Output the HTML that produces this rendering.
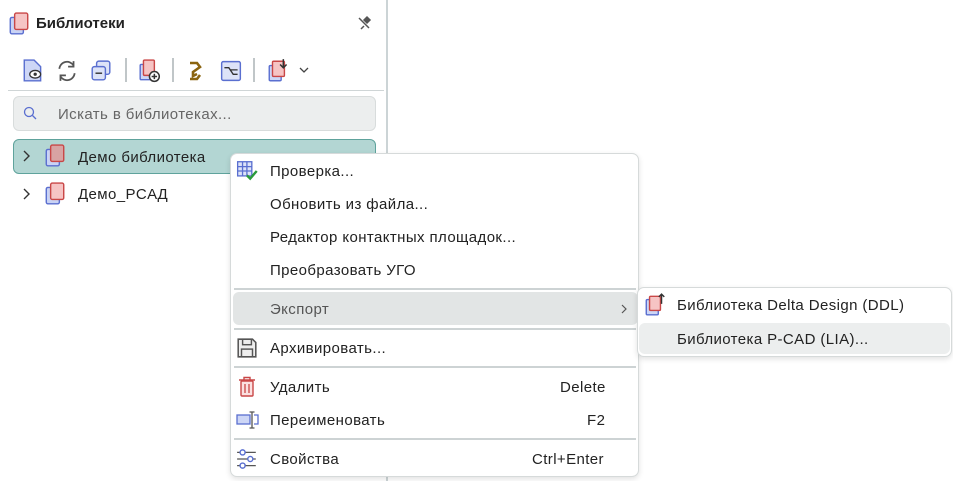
<!DOCTYPE html>
<html><head><meta charset="utf-8"><style>
*{margin:0;padding:0;box-sizing:border-box}
body{width:953px;height:481px;background:#fff;font-family:"Liberation Sans","DejaVu Sans",sans-serif;position:relative;overflow:hidden;color:#222}
.a{position:absolute}
.t{font-size:15px;letter-spacing:0.4px;white-space:nowrap}
.sep{position:absolute;height:2px;background:#cdd3d4}
</style></head><body>
<div class="a" style="left:386px;top:0;width:2px;height:481px;background:#ccd4d6"></div>

<svg class="a" style="left:8px;top:12px" width="22" height="24" viewBox="0 0 20 22"><rect x="2" y="5" width="12" height="15" rx="1.5" fill="#c9d3f5" stroke="#5b6fd0" stroke-width="1.3"/><rect x="6" y="1" width="12" height="15" rx="1.5" fill="#f6c4c4" stroke="#c94747" stroke-width="1.3"/></svg>
<div class="a" style="left:36px;top:15px;font-weight:bold;font-size:15px;white-space:nowrap">Библиотеки</div>
<svg class="a" style="left:356px;top:15px" width="16" height="16" viewBox="0 0 16 16"><path d="M3 3L13 13M5 14L8 11M8 5L11 2L14 5L11 8Z" stroke="#555" stroke-width="1.5" fill="#555"/></svg>

<svg class="a" style="left:22px;top:59px" width="22" height="24" viewBox="0 0 20 22"><path d="M2 1H11L17 7V20H2Z" fill="#cdd6f6" stroke="#5a6fd0" stroke-width="1.3"/><ellipse cx="12" cy="14" rx="5" ry="3.5" fill="#fff" stroke="#333" stroke-width="1.2"/><circle cx="12" cy="14" r="1.5" fill="#333"/></svg>
<svg class="a" style="left:55px;top:59px" width="24" height="24" viewBox="0 0 22 22"><path d="M4 9A7 7 0 0 1 17 6M18 13A7 7 0 0 1 5 16" stroke="#555" stroke-width="1.6" fill="none"/><path d="M17 2V7H12M5 20V15H10" stroke="#555" stroke-width="1.6" fill="none"/></svg>
<svg class="a" style="left:90px;top:60px" width="22" height="22" viewBox="0 0 20 20"><rect x="6" y="1" width="12" height="12" rx="2" fill="#dde3f8" stroke="#5a6fd0" stroke-width="1.3"/><rect x="2" y="6" width="12" height="12" rx="2" fill="#dde3f8" stroke="#5a6fd0" stroke-width="1.3"/><path d="M5 12H11" stroke="#333" stroke-width="1.3"/></svg>
<div class="a" style="left:125px;top:58px;width:2px;height:24px;background:#c0c6c8"></div>
<svg class="a" style="left:138px;top:59px" width="24" height="24" viewBox="0 0 22 22"><rect x="2" y="5" width="10" height="14" rx="1" fill="#cdd6f6" stroke="#5a6fd0" stroke-width="1.3"/><rect x="5" y="1" width="10" height="14" rx="1" fill="#f6c4c4" stroke="#c94747" stroke-width="1.3"/><circle cx="15" cy="16" r="4.5" fill="#fff" stroke="#333" stroke-width="1.4"/><path d="M15 13.5V18.5M12.5 16H17.5" stroke="#333" stroke-width="1.4"/></svg>
<div class="a" style="left:172px;top:58px;width:2px;height:24px;background:#c0c6c8"></div>
<svg class="a" style="left:187px;top:60px" width="16" height="22" viewBox="0 0 16 22"><path d="M3 3L10 3L13 7L6 12L6 16L10 14M3 19L10 19L13 15" stroke="#8b6410" stroke-width="2.6" fill="none"/></svg>
<svg class="a" style="left:220px;top:60px" width="22" height="22" viewBox="0 0 20 20"><rect x="1.5" y="1.5" width="17" height="17" rx="1.5" fill="#dde3f8" stroke="#5a6fd0" stroke-width="1.3"/><path d="M4 7H8L12 13H16M9 9H16" stroke="#333" stroke-width="1.2" fill="none"/></svg>
<div class="a" style="left:253px;top:58px;width:2px;height:24px;background:#c0c6c8"></div>
<svg class="a" style="left:267px;top:58px" width="24" height="26" viewBox="0 0 22 24"><rect x="2" y="7" width="11" height="14" rx="1" fill="#cdd6f6" stroke="#5a6fd0" stroke-width="1.3"/><rect x="5" y="3" width="11" height="14" rx="1" fill="#f6c4c4" stroke="#c94747" stroke-width="1.3"/><path d="M15 1V9M12 6L15 9L18 6" stroke="#333" stroke-width="1.4" fill="none"/></svg>
<svg class="a" style="left:298px;top:66px" width="12" height="8" viewBox="0 0 12 8"><path d="M2 2L6 6L10 2" stroke="#444" stroke-width="1.3" fill="none"/></svg>

<div class="a" style="left:8px;top:90px;width:376px;height:1px;background:#cfd5d6"></div>
<div class="a" style="left:13px;top:96px;width:363px;height:35px;background:#eceeee;border:1px solid #d8dcdc;border-radius:6px"></div>
<svg class="a" style="left:23px;top:106px" width="14" height="14" viewBox="0 0 14 14"><circle cx="6" cy="6" r="4.5" stroke="#5a6fd0" stroke-width="1.3" fill="none"/><path d="M9.5 9.5L13 13" stroke="#5a6fd0" stroke-width="1.3"/></svg>
<div class="a t" style="left:58px;top:106px;color:#666">Искать в библиотеках...</div>

<div class="a" style="left:13px;top:139px;width:363px;height:35px;background:#b3d6d3;border:1px solid #5fa39c;border-radius:6px"></div>
<svg class="a" style="left:21px;top:149px" width="10" height="14" viewBox="0 0 10 14"><path d="M3 2L8 7L3 12" stroke="#333" stroke-width="1.4" fill="none"/></svg>
<svg class="a" style="left:44px;top:144px" width="22" height="24" viewBox="0 0 20 22"><rect x="2" y="5" width="12" height="15" rx="1.5" fill="#c9d3f5" stroke="#5b6fd0" stroke-width="1.3"/><rect x="6" y="1" width="12" height="15" rx="1.5" fill="#d8a3a3" stroke="#c94747" stroke-width="1.3"/></svg>
<div class="a t" style="left:78px;top:149px">Демо библиотека</div>
<svg class="a" style="left:21px;top:187px" width="10" height="14" viewBox="0 0 10 14"><path d="M3 2L8 7L3 12" stroke="#333" stroke-width="1.4" fill="none"/></svg>
<svg class="a" style="left:44px;top:182px" width="22" height="24" viewBox="0 0 20 22"><rect x="2" y="5" width="12" height="15" rx="1.5" fill="#c9d3f5" stroke="#5b6fd0" stroke-width="1.3"/><rect x="6" y="1" width="12" height="15" rx="1.5" fill="#f6c4c4" stroke="#c94747" stroke-width="1.3"/></svg>
<div class="a t" style="left:78px;top:186px">Демо_PCAД</div>

<div class="a" style="left:230px;top:153px;width:409px;height:324px;background:#fff;border:1px solid #d6dada;border-radius:7px;box-shadow:0 2px 6px rgba(0,0,0,.12)"></div>
<svg class="a" style="left:236px;top:160px" width="24" height="22" viewBox="0 0 22 20"><rect x="1.5" y="1.5" width="13" height="13" fill="#dde3f8" stroke="#5a6fd0" stroke-width="1.2"/><path d="M1.5 6H14.5M1.5 10H14.5M6 1.5V14.5M10 1.5V14.5" stroke="#5a6fd0" stroke-width="1.2"/><path d="M10 14L13 17L19 10" stroke="#2a9a3a" stroke-width="2.2" fill="none"/></svg>
<div class="a t" style="left:270px;top:163px">Проверка...</div>
<div class="a t" style="left:270px;top:196px">Обновить из файла...</div>
<div class="a t" style="left:270px;top:229px">Редактор контактных площадок...</div>
<div class="a t" style="left:270px;top:262px">Преобразовать УГО</div>
<div class="sep" style="left:234px;top:288px;width:402px"></div>
<div class="a" style="left:233px;top:292px;width:405px;height:33px;background:#e2e5e5;border-radius:6px"></div>
<div class="a t" style="left:270px;top:301px;color:#555">Экспорт</div>
<svg class="a" style="left:620px;top:302px" width="8" height="14" viewBox="0 0 8 14"><path d="M2 3L6 7L2 11" stroke="#555" stroke-width="1.2" fill="none"/></svg>
<div class="sep" style="left:234px;top:328px;width:402px"></div>
<svg class="a" style="left:236px;top:337px" width="22" height="22" viewBox="0 0 20 20"><path d="M2 2H15L18 5V18H2Z" fill="#eee" stroke="#555" stroke-width="1.4"/><rect x="6" y="2" width="8" height="5" fill="none" stroke="#555" stroke-width="1.3"/><rect x="5" y="11" width="10" height="7" fill="none" stroke="#555" stroke-width="1.3"/></svg>
<div class="a t" style="left:270px;top:340px">Архивировать...</div>
<div class="sep" style="left:234px;top:366px;width:402px"></div>
<svg class="a" style="left:238px;top:375px" width="18" height="24" viewBox="0 0 18 22"><path d="M1 4H17M6 4V1.5H12V4" stroke="#c94747" stroke-width="1.4" fill="none"/><rect x="3" y="5" width="12" height="15" rx="1" fill="#fbe0e0" stroke="#c94747" stroke-width="1.4"/><path d="M7 8V17M11 8V17" stroke="#c94747" stroke-width="1.3"/></svg>
<div class="a t" style="left:270px;top:379px">Удалить</div>
<div class="a t" style="left:560px;top:379px">Delete</div>
<svg class="a" style="left:236px;top:411px" width="24" height="18" viewBox="0 0 24 18"><rect x="1" y="4" width="13" height="9" fill="#cdd6f6" stroke="#5a6fd0" stroke-width="1.3"/><path d="M18 4H22V13H18" stroke="#5a6fd0" stroke-width="1.3" fill="none"/><path d="M16 1V17M13.5 1H18.5M13.5 17H18.5" stroke="#555" stroke-width="1.3"/></svg>
<div class="a t" style="left:270px;top:412px">Переименовать</div>
<div class="a t" style="left:587px;top:412px">F2</div>
<div class="sep" style="left:234px;top:438px;width:402px"></div>
<svg class="a" style="left:236px;top:448px" width="22" height="22" viewBox="0 0 20 20"><path d="M1 4H18M1 10H18M1 16H18" stroke="#555" stroke-width="1.2"/><circle cx="6" cy="4" r="2.3" fill="#fff" stroke="#5a6fd0" stroke-width="1.3"/><circle cx="13" cy="10" r="2.3" fill="#fff" stroke="#5a6fd0" stroke-width="1.3"/><circle cx="6" cy="16" r="2.3" fill="#fff" stroke="#5a6fd0" stroke-width="1.3"/></svg>
<div class="a t" style="left:270px;top:451px">Свойства</div>
<div class="a t" style="left:532px;top:451px">Ctrl+Enter</div>

<div class="a" style="left:637px;top:287px;width:315px;height:70px;background:#fff;border:1px solid #d6dada;border-radius:7px;box-shadow:0 2px 6px rgba(0,0,0,.12)"></div>
<svg class="a" style="left:644px;top:293px" width="22" height="24" viewBox="0 0 20 22"><rect x="2" y="6" width="11" height="14" rx="1" fill="#cdd6f6" stroke="#5a6fd0" stroke-width="1.3"/><rect x="5" y="3" width="10" height="13" rx="1" fill="#f6c4c4" stroke="#c94747" stroke-width="1.3"/><path d="M16 10V1M13.5 3.5L16 1L18.5 3.5" stroke="#333" stroke-width="1.3" fill="none"/></svg>
<div class="a t" style="left:677px;top:297px">Библиотека Delta Design (DDL)</div>
<div class="a" style="left:639px;top:323px;width:311px;height:31px;background:#eceeee;border-radius:6px"></div>
<div class="a t" style="left:677px;top:331px">Библиотека P-CAD (LIA)...</div>
</body></html>
